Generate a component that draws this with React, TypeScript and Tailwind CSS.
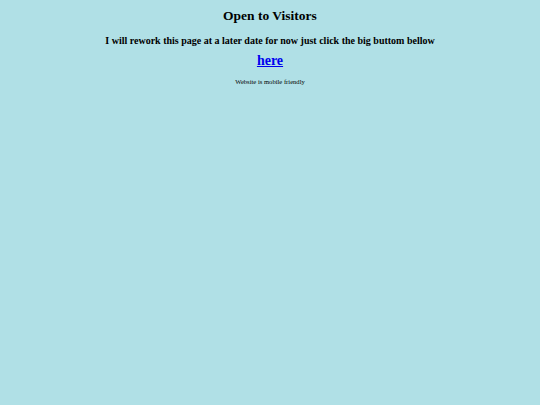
export default function App() {
  return (
    <div className="min-h-screen w-full bg-[#b0e0e6] font-['Liberation_Serif',serif] text-black">
      <div className="flex flex-col items-center pt-[8px] text-center">
        <h1 className="text-[13.5px] font-bold leading-[16px]">Open to Visitors</h1>
        <h2 className="mt-[10.5px] text-[10px] font-bold leading-[12px]">
          I will rework this page at a later date for now just click the big buttom bellow
        </h2>
        <a href="#" className="mt-[6.5px] text-[14px] font-bold leading-[16px] text-[#0000ee] underline">
          here
        </a>
        <p className="mt-[9px] text-[6.6px] leading-[8px]">Website is mobile friendly</p>
      </div>
    </div>
  );
}
